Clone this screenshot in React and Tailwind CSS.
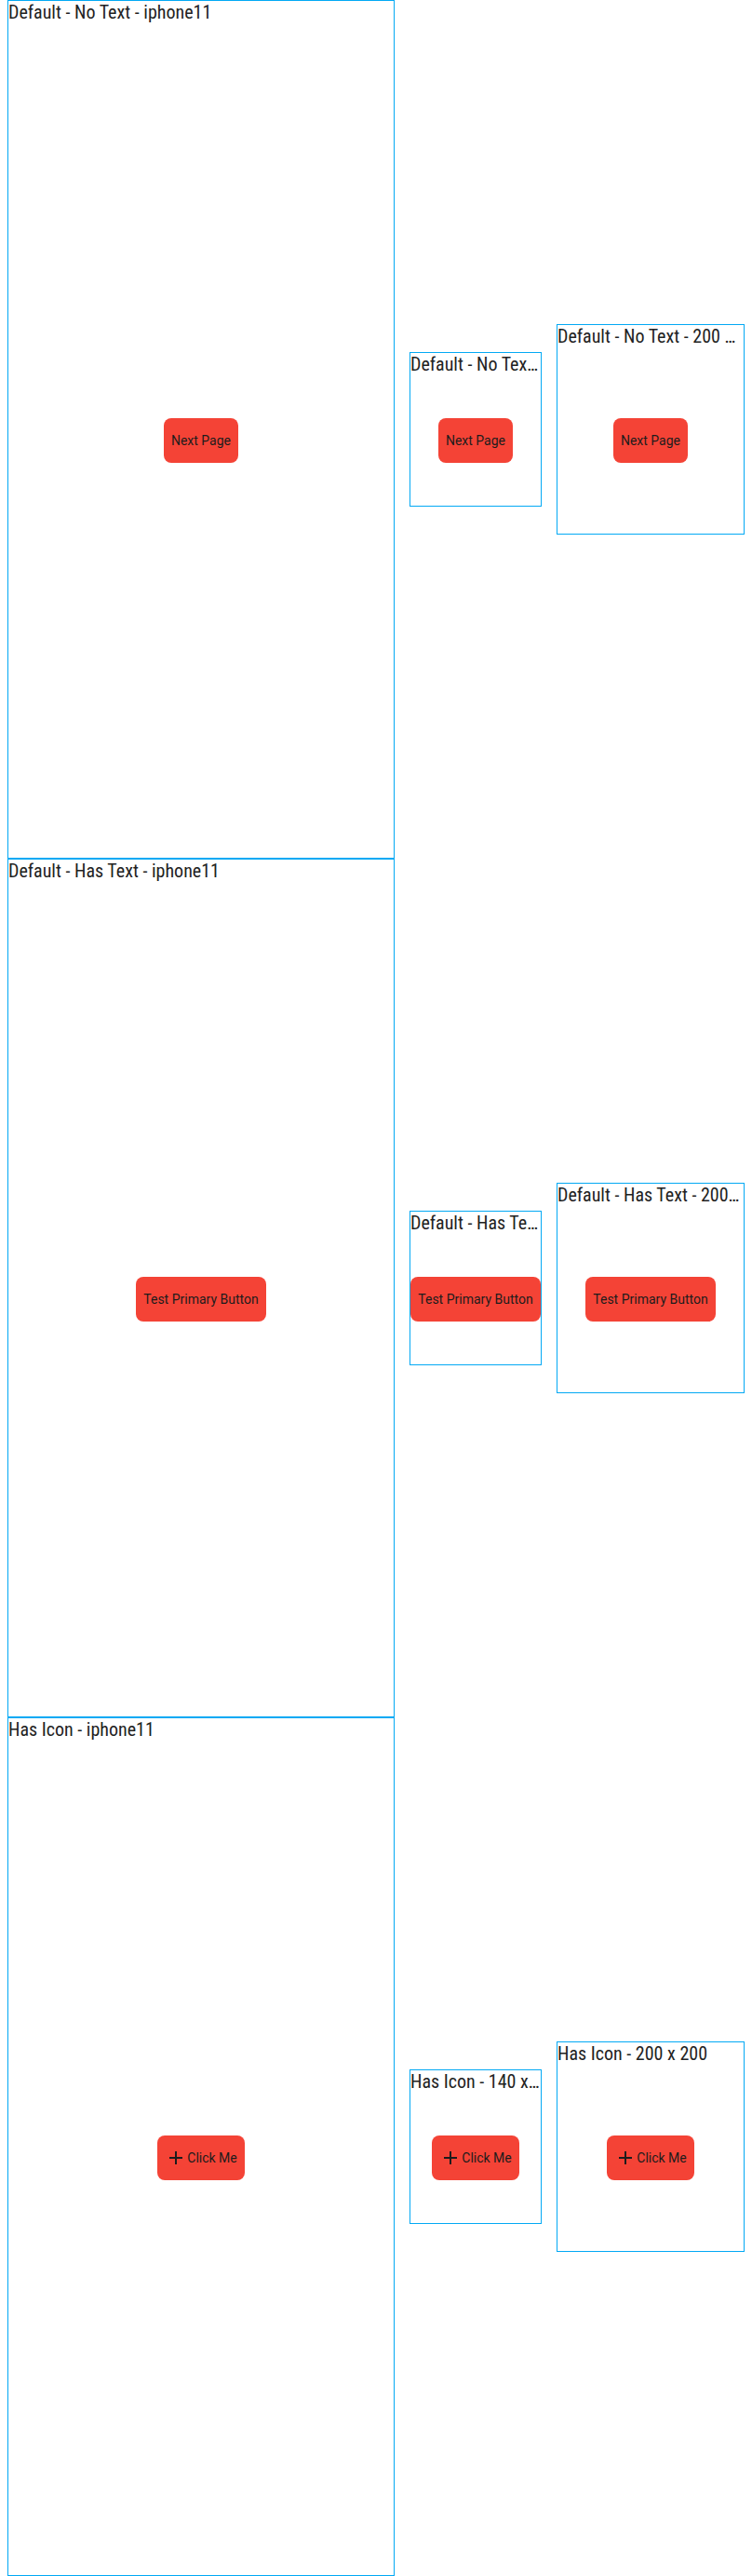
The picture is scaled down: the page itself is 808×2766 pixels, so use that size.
import { useState } from 'react'

const rows = [
  { name: 'Default - No Text', label: 'Next Page', icon: false },
  { name: 'Default - Has Text', label: 'Test Primary Button', icon: false },
  { name: 'Has Icon', label: 'Click Me', icon: true },
]

const sizes = [
  { key: 'iphone11', title: 'iphone11', box: 'w-[414px] h-[896px]', head: 'w-[414px]' },
  { key: 'small', title: '140 x 140', box: 'w-[140px] h-[140px]', head: 'w-[140px]' },
  { key: 'medium', title: '200 x 200', box: 'w-[200px] h-[200px]', head: 'w-[200px]' },
]

function AddIcon() {
  return (
    <svg viewBox="0 0 24 24" className="h-6 w-6 shrink-0" fill="currentColor">
      <path d="M19 13h-6v6h-2v-6H5v-2h6V5h2v6h6v2z" />
    </svg>
  )
}

function PrimaryButton({ label, icon }) {
  const [clicks, setClicks] = useState(0)

  return (
    <button
      type="button"
      onClick={() => setClicks(clicks + 1)}
      className="flex h-12 items-center rounded-lg bg-[#f44336] px-2 font-[Roboto] text-[14px] leading-5 whitespace-nowrap text-[#1c1c1c]"
    >
      {icon ? <AddIcon /> : null}
      <span>{label}</span>
    </button>
  )
}

function Frame({ row, size }) {
  return (
    <div className="flex shrink-0 flex-col border border-[#03a9f4]">
      <div className={`${size.head} h-6 truncate font-[Roboto] font-stretch-[85%] text-[20px] leading-6 text-[#222222]`}>
        {row.name} - {size.title}
      </div>
      <div className={`${size.box} flex items-center justify-center`}>
        <PrimaryButton label={row.label} icon={row.icon} />
      </div>
    </div>
  )
}

export default function App() {
  return (
    <div className="bg-white px-2 font-[Roboto]">
      {rows.map((row) => (
        <div key={row.name} className="flex h-[922px] items-center gap-4">
          {sizes.map((size) => (
            <Frame key={size.key} row={row} size={size} />
          ))}
        </div>
      ))}
    </div>
  )
}
